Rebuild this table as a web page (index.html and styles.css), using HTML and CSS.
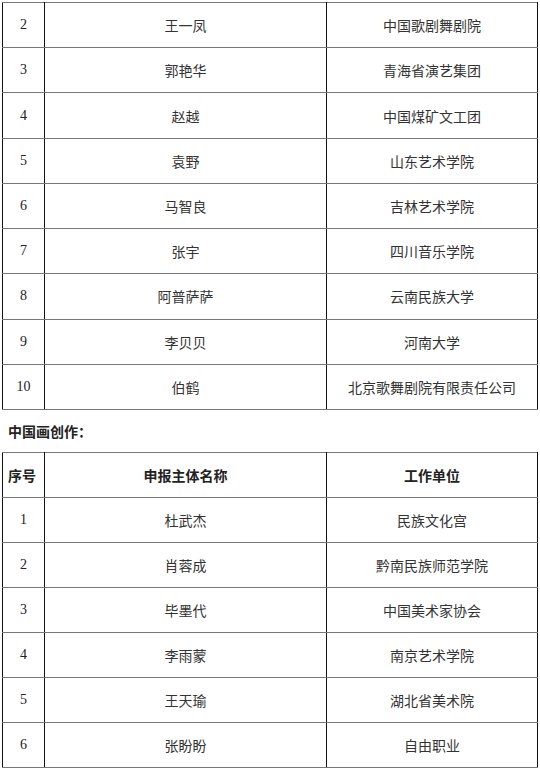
FILE: index.html
```html
<!DOCTYPE html>
<html lang="zh">
<head>
<meta charset="utf-8">
<link rel="stylesheet" href="styles.css">
</head>
<body>
<table class="list first">
  <colgroup><col class="c1"><col class="c2"><col class="c3"></colgroup>
  <tr><td class="num">2</td><td>王一凤</td><td>中国歌剧舞剧院</td></tr>
  <tr><td class="num">3</td><td>郭艳华</td><td>青海省演艺集团</td></tr>
  <tr><td class="num">4</td><td>赵越</td><td>中国煤矿文工团</td></tr>
  <tr><td class="num">5</td><td>袁野</td><td>山东艺术学院</td></tr>
  <tr><td class="num">6</td><td>马智良</td><td>吉林艺术学院</td></tr>
  <tr><td class="num">7</td><td>张宇</td><td>四川音乐学院</td></tr>
  <tr><td class="num">8</td><td>阿普萨萨</td><td>云南民族大学</td></tr>
  <tr><td class="num">9</td><td>李贝贝</td><td>河南大学</td></tr>
  <tr><td class="num">10</td><td>伯鹤</td><td>北京歌舞剧院有限责任公司</td></tr>
</table>
<p class="heading">中国画创作：</p>
<table class="list second">
  <colgroup><col class="c1"><col class="c2"><col class="c3"></colgroup>
  <tr class="head"><td>序号</td><td>申报主体名称</td><td>工作单位</td></tr>
  <tr><td class="num">1</td><td>杜武杰</td><td>民族文化宫</td></tr>
  <tr><td class="num">2</td><td>肖蓉成</td><td>黔南民族师范学院</td></tr>
  <tr><td class="num">3</td><td>毕墨代</td><td>中国美术家协会</td></tr>
  <tr><td class="num">4</td><td>李雨蒙</td><td>南京艺术学院</td></tr>
  <tr><td class="num">5</td><td>王天瑜</td><td>湖北省美术院</td></tr>
  <tr><td class="num">6</td><td>张盼盼</td><td>自由职业</td></tr>
</table>
</body>
</html>
```
FILE: styles.css
```css
html, body {
  margin: 0;
  padding: 0;
  background: #fff;
}
body {
  font-family: "Noto Sans CJK SC", "Noto Sans", sans-serif;
  font-size: 14px;
  color: #333;
}
.list {
  border-collapse: collapse;
  table-layout: fixed;
  width: 535px;
  margin-left: 2px;
}
.first {
  margin-top: 2px;
}
.c1 { width: 42px; }
.c2 { width: 282px; }
.c3 { width: 211px; }
.list td {
  height: 44px;
  padding: 0;
  text-align: center;
  vertical-align: middle;
  line-height: 20px;
  border-left: 1px solid #111;
  border-right: 1px solid #111;
  border-top: 1px solid #777;
  border-bottom: 1px solid #777;
}
.first td {
  height: 44.22px;
}
.list td.num {
  font-family: "Liberation Serif", "Times New Roman", serif;
  font-size: 14px;
  color: #222;
}
.head td {
  font-weight: bold;
  color: #222;
}
.head td:first-child {
  text-align: left;
  padding-left: 5px;
}
.heading {
  margin: 0;
  height: 42px;
  line-height: 42px;
  padding-left: 8px;
  font-weight: bold;
  color: #222;
}
```
